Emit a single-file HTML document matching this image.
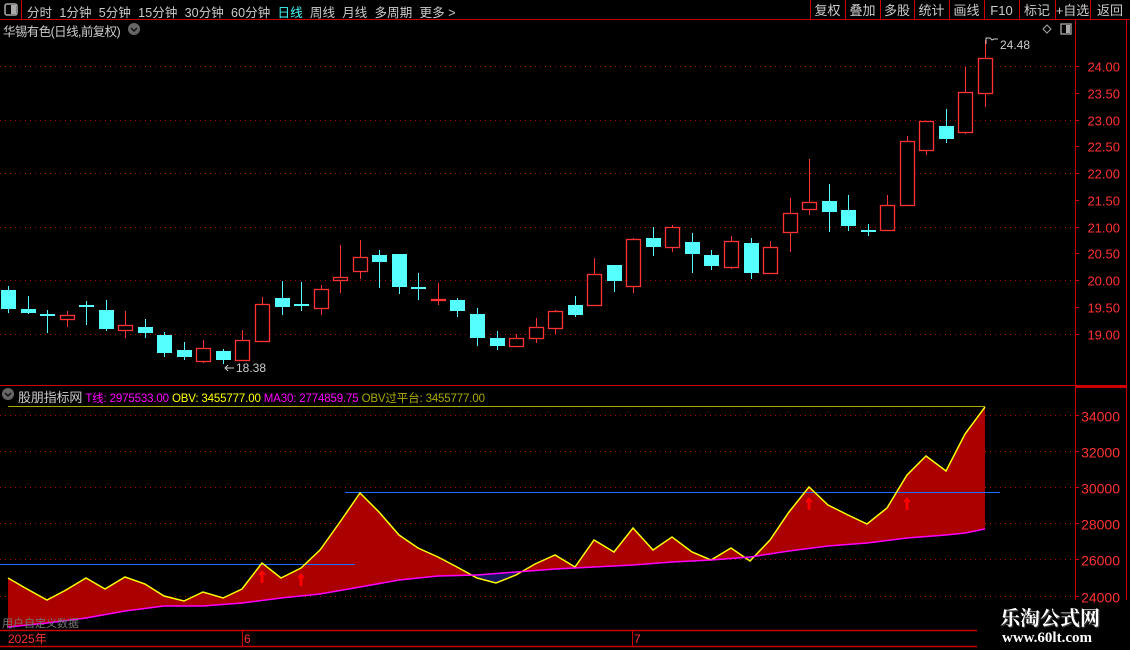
<!DOCTYPE html>
<html><head><meta charset="utf-8">
<style>
*{margin:0;padding:0;box-sizing:border-box}
body{width:1130px;height:650px;background:#000;overflow:hidden;position:relative;font-family:"Liberation Sans","Noto Sans CJK SC",sans-serif;color:#ccc}
.t{position:absolute;white-space:nowrap}
</style></head><body>
<svg id="s" width="1130" height="650" style="position:absolute;left:0;top:0" xmlns="http://www.w3.org/2000/svg"></svg>
<div class="t" style="left:27px;top:2px;font-size:12.5px;color:#ccc;letter-spacing:0.1px">分时&nbsp;&nbsp;1分钟&nbsp;&nbsp;5分钟&nbsp;&nbsp;15分钟&nbsp;&nbsp;30分钟&nbsp;&nbsp;60分钟&nbsp;&nbsp;<span style="color:#4ff">日线</span>&nbsp;&nbsp;周线&nbsp;&nbsp;月线&nbsp;&nbsp;多周期&nbsp;&nbsp;更多 &gt;</div>
<div class="t" style="left:3px;top:21px;font-size:12.5px;color:#ccc;letter-spacing:-0.6px">华锡有色(日线,前复权)</div>
<div class="t" style="left:18px;top:387px;font-size:11.5px;letter-spacing:-0.15px"><span style="color:#ccc;font-size:13px">股朋指标网</span> <span style="color:#f0f">T线: 2975533.00</span> <span style="color:#ff0">OBV: 3455777.00</span> <span style="color:#f0f">MA30: 2774859.75</span> <span style="color:#aa0">OBV过平台: 3455777.00</span></div>
<div class="t" style="left:1000px;top:602px;font-size:20px;font-weight:bold;color:#fff;font-family:'Noto Serif CJK SC',serif;text-shadow:0 0 2px #000,1px 1px 1px #666">乐淘公式网</div>
<div class="t" style="left:1002px;top:630px;font-size:15px;font-weight:bold;color:#fff;font-family:'Liberation Serif',serif">www.60lt.com</div>
<script>
const S=document.getElementById('s');let h='';
const P=p=>280-(p-20)*53.5;
const V=v=>415+(34000-v)*0.01806;
h+='<line x1="0" y1="19.5" x2="1130" y2="19.5" stroke="#c00"/><line x1="21.5" y1="0" x2="21.5" y2="19" stroke="#c00"/>';
h+='<rect x="5" y="4" width="12" height="11" rx="2" fill="none" stroke="#aaa" stroke-width="1.5"/><rect x="11" y="5" width="5" height="9" fill="#aaa"/>';
const btn=['复权','叠加','多股','统计','画线','F10','标记','+自选','返回'];
const bx=[810,845,880,914,949,984,1019,1055,1090,1130];
for(let i=0;i<9;i++){h+=`<line x1="${bx[i]+.5}" y1="0" x2="${bx[i]+.5}" y2="19" stroke="#c00"/><text x="${(bx[i]+bx[i+1])/2}" y="15" fill="#ccc" font-size="13" text-anchor="middle">${btn[i]}</text>`}
h+='<circle cx="134" cy="29" r="6" fill="#666"/><path d="M131 28l3 3 3-3" stroke="#111" stroke-width="1.5" fill="none"/>';
h+='<circle cx="8" cy="394" r="6" fill="#666"/><path d="M5 393l3 3 3-3" stroke="#111" stroke-width="1.5" fill="none"/>';
h+='<path d="M1047 25l4 4-4 4-4-4z" stroke="#aaa" fill="none"/><rect x="1061" y="24" width="10" height="10" fill="none" stroke="#aaa" stroke-width="1.3"/><rect x="1066" y="25" width="4" height="8" fill="#aaa"/>';
h+='<line x1="1075.5" y1="20" x2="1075.5" y2="600" stroke="#c00"/><line x1="1126.5" y1="20" x2="1126.5" y2="600" stroke="#c00"/>';
h+='<line x1="0" y1="385.5" x2="1126" y2="385.5" stroke="#c00"/><line x1="1076" y1="387" x2="1126" y2="387" stroke="#c00" stroke-width="2"/>';
for(let p=19;p<=24;p+=0.5){const y=Math.round(P(p))+.5;h+=`<line x1="1075" y1="${y}" x2="1079" y2="${y}" stroke="#c00"/><text x="1120" y="${y+5}" fill="#f33" font-size="13" text-anchor="end">${p.toFixed(2)}</text>`;
 if(p%1==0)h+=`<line x1="0" y1="${y}" x2="1075" y2="${y}" stroke="#a00" stroke-dasharray="1 4"/>`;}
for(let v=24000;v<=34000;v+=2000){const y=Math.round(V(v))+.5;h+=`<line x1="1075" y1="${y}" x2="1079" y2="${y}" stroke="#c00"/><text x="1120" y="${y+6}" fill="#f33" font-size="14" text-anchor="end">${v}</text><line x1="0" y1="${y}" x2="1075" y2="${y}" stroke="#a00" stroke-dasharray="1 4"/>`;}
const C=[[290,309,286,313,0],[309,313,296,314,0],[314,314,310,333,0],[315,319,311,327,1],[305,307,301,325,0],[310,329,300,331,0],[325,330,311,338,1],[327,333,319,338,0],[335,353,332,357,0],[350,357,342,360,0],[348,361,340,363,1],[351,360,349,364,0],[340,360,330,360,1],[304,341,297,342,1],[298,307,281,315,0],[304,304,282,311,0],[289,308,285,315,1],[277,280,245,293,1],[257,271,240,279,1],[255,262,250,288,0],[254,287,254,294,0],[287,287,273,300,0],[299,300,283,305,1],[300,311,298,317,0],[314,338,308,346,0],[338,346,331,350,0],[338,346,334,347,1],[327,338,318,343,1],[311,328,310,334,1],[305,315,296,317,0],[274,305,258,305,1],[265,281,265,292,0],[239,286,238,293,1],[238,247,227,256,0],[227,247,225,252,1],[242,254,233,273,0],[255,266,250,270,0],[241,267,236,269,1],[243,273,238,279,0],[247,273,241,273,1],[213,232,198,252,1],[202,209,159,215,1],[201,212,184,232,0],[210,226,195,231,0],[230,232,224,236,0],[205,230,195,230,1],[141,205,136,205,1],[121,150,121,155,1],[126,139,109,143,0],[92,132,67,134,1],[58,93,40,107,1]];
C.forEach((c,i)=>{const x=Math.round(8+i*19.54);const col=c[4]?'#f33':'#5ff';
 h+=`<line x1="${x+.5}" y1="${c[2]}" x2="${x+.5}" y2="${c[3]}" stroke="${col}"/>`;
 const bh=Math.max(c[1]-c[0],1);
 if(c[4])h+=`<rect x="${x-6.5}" y="${c[0]+.5}" width="14" height="${bh}" fill="#000" stroke="${col}" stroke-width="1.3"/>`;
 else h+=`<rect x="${x-7}" y="${c[0]}" width="15" height="${bh+(bh<2?1:0)}" fill="${col}"/>`;});
h+='<text x="236" y="372" fill="#ccc" font-size="12">18.38</text><path d="M234 368h-9m3-3l-3 3 3 3" stroke="#ccc" fill="none"/>';
h+='<text x="1000" y="49" fill="#ccc" font-size="12">24.48</text><path d="M986 44v-6h4l2 2 2-1h4" stroke="#ccc" fill="none"/>';
const Y=[[8,578],[27,589],[47,600],[66,590],[86,578],[105,589],[125,577],[145,584],[164,596],[184,601],[203,592],[223,598],[242,589],[262,563],[281,578],[301,568],[320,550],[340,522],[360,493],[379,512],[399,535],[418,548],[438,557],[457,567],[477,578],[496,583],[516,575],[535,564],[555,555],[575,567],[594,540],[614,552],[633,528],[653,550],[672,537],[692,552],[711,560],[731,548],[750,561],[770,540],[789,512],[809,487],[828,505],[848,515],[867,524],[887,508],[907,475],[926,456],[946,471],[965,434],[985,407]];
const M=[[8,627],[47,623],[86,618],[125,611],[164,606],[203,606],[242,603],[281,598],[320,594],[360,587],[399,580],[438,576],[477,575],[516,572],[555,569],[594,567],[633,565],[672,562],[711,560],[750,557],[789,551],[828,546],[867,543],[907,538],[946,535],[965,533],[985,529]];
const ys=Y.map(p=>p.join(',')).join(' '),ms=M.map(p=>p.join(',')).join(' ');
h+=`<defs><clipPath id="ca"><polygon points="${ys} 985,640 8,640"/></clipPath><clipPath id="cb"><polygon points="${ys} 985,380 8,380"/></clipPath></defs>`;
h+=`<polygon points="${ms} 985,380 8,380" fill="#a00" clip-path="url(#ca)"/>`;
h+=`<polygon points="${ms} 985,640 8,640" fill="#14145e" clip-path="url(#cb)"/>`;
h+=`<line x1="8" y1="406.5" x2="985" y2="406.5" stroke="#aa0"/>`;
h+=`<line x1="345" y1="492.5" x2="1000" y2="492.5" stroke="#1e6bff"/><line x1="0" y1="564.5" x2="355" y2="564.5" stroke="#1e6bff"/>`;
h+=`<polyline points="${ys}" fill="none" stroke="#ff0" stroke-width="1.5"/><polyline points="${ms}" fill="none" stroke="#f0f" stroke-width="1.5"/>`;
[[262,570],[301,573],[809,497],[907,497]].forEach(a=>{h+=`<path d="M${a[0]} ${a[1]}l-4 5h2.5v8h3v-8h2.5z" fill="#f00"/>`});
h+='<text x="2" y="627" fill="#777" font-size="11">用户自定义数据</text>';
h+='<line x1="0" y1="630.5" x2="977" y2="630.5" stroke="#c00" stroke-width="1.5"/><line x1="0" y1="646.5" x2="977" y2="646.5" stroke="#c00" stroke-width="1.5"/>';
h+='<text x="8" y="643" fill="#f33" font-size="12">2025年</text><line x1="242.5" y1="631" x2="242.5" y2="646" stroke="#c00"/><text x="244" y="643" fill="#f33" font-size="12">6</text><line x1="632.5" y1="631" x2="632.5" y2="646" stroke="#c00"/><text x="634" y="643" fill="#f33" font-size="12">7</text>';
S.innerHTML=h;
</script>
</body></html>
